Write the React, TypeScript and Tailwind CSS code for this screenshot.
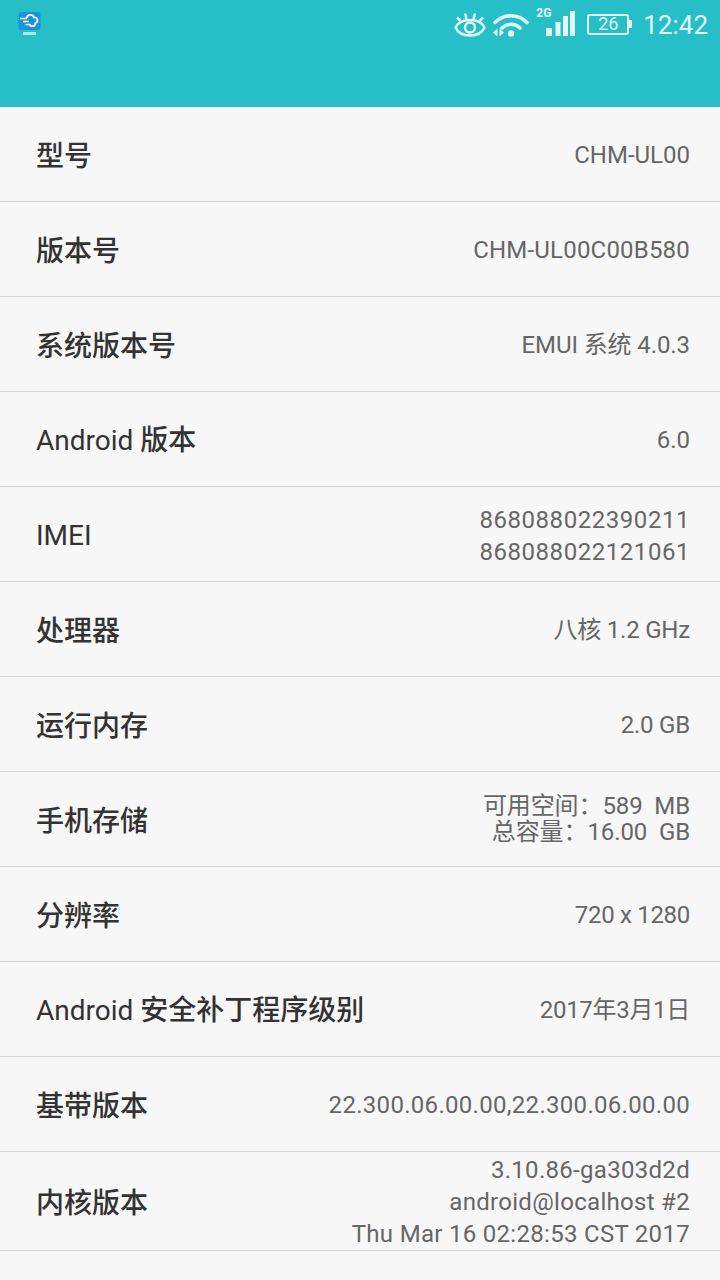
import type { ReactNode } from "react";

const rows: { label: ReactNode; value: ReactNode; labelClass?: string; valueClass?: string; rowClass?: string }[] = [
  { label: <span className="font-medium">型号</span>, value: "CHM-UL00" },
  { label: <span className="font-medium">版本号</span>, value: "CHM-UL00C00B580", valueClass: "leading-[32px] pt-[2px] tracking-[0.2px]" },
  { label: <span className="font-medium">系统版本号</span>, value: "EMUI 系统 4.0.3", valueClass: "leading-[32px] pt-[2px] tracking-[-0.1px]" },
  { label: <>Android <span className="font-medium">版本</span></>, labelClass: "pt-[4px]", value: "6.0" },
  {
    label: "IMEI",
    labelClass: "pt-[4px]",
    value: (
      <>
        <div>868088022390211</div>
        <div>868088022121061</div>
      </>
    ),
    valueClass: "leading-[32px] pt-[4px] tracking-[0.55px]",
  },
  { label: <span className="font-medium">处理器</span>, value: "八核 1.2 GHz", valueClass: "leading-[32px] pt-[2px] tracking-[-0.2px]" },
  { label: <span className="font-medium">运行内存</span>, value: "2.0 GB", valueClass: "leading-[32px] pt-[2px] tracking-[-0.2px]" },
  {
    label: <span className="font-medium">手机存储</span>,
    value: (
      <>
        <div className="whitespace-pre">可用空间：589  MB</div>
        <div className="whitespace-pre">总容量：16.00  GB</div>
      </>
    ),
    valueClass: "leading-[26px] tracking-[-0.1px]",
  },
  { label: <span className="font-medium">分辨率</span>, value: "720 x 1280", valueClass: "leading-[32px] pt-[2px] tracking-[-0.3px]" },
  {
    label: <>Android <span className="font-medium">安全补丁程序级别</span></>,
    labelClass: "pt-[4px]",
    value: "2017年3月1日",
    valueClass: "leading-[32px] pt-[2px] tracking-[-0.3px]",
  },
  {
    label: <span className="font-medium">基带版本</span>,
    value: "22.300.06.00.00,22.300.06.00.00",
    valueClass: "leading-[32px] pt-[2px] tracking-[0.3px]",
  },
  {
    label: <span className="font-medium">内核版本</span>,
    value: (
      <>
        <div>3.10.86-ga303d2d</div>
        <div>android@localhost #2</div>
        <div>Thu Mar 16 02:28:53 CST 2017</div>
      </>
    ),
    valueClass: "leading-[32px] pt-[2px] tracking-[0.3px]",
    rowClass: "h-[99px]",
  },
];

function StatusIcons() {
  return (
    <div className="flex h-[50px] items-center text-[#e2f8f8]">
      {/* eye */}
      <svg width="32" height="26" viewBox="0 0 32 26" fill="none" stroke="currentColor" strokeWidth="2.500">
        <path d="M1.500 15.500C4 10 9.500 8 16 8s12 2 14.500 7.500C28 21 22.500 23.500 16 23.500S4 21 1.500 15.500z" />
        <circle cx="16" cy="15.500" r="5" />
        <path d="M6.500 9L3 5.500M12.500 7L11 1.500M19.500 7L21 1.500M25.500 9L29 5.500" />
      </svg>
      {/* wifi */}
      <svg className="ml-[6px]" width="38" height="26" viewBox="0 0 38 26" fill="none" stroke="currentColor" strokeLinecap="round">
        <path d="M3 10.500C12 1.500 26 1.500 35 10.500" strokeWidth="3.600" />
        <path d="M10 16c5.500-5 12.500-5 18 0" strokeWidth="3.600" />
        <circle cx="19" cy="21.500" r="3.200" fill="currentColor" stroke="none" />
        <path d="M5.500 16.500l-4.500 4 4.500 4zM7.500 16.500l4.500 4-4.500 4z" fill="currentColor" stroke="none" />
      </svg>
      {/* signal */}
      <div className="relative ml-[6px] mb-[2px] h-[32px] w-[40px]">
        <span className="absolute left-0 top-[-1px] font-['Roboto',sans-serif] text-[12px] font-bold leading-[12px]">2G</span>
        <svg className="absolute left-0 top-0" width="40" height="32" viewBox="0 0 40 32" fill="currentColor">
          <rect x="10" y="20" width="6" height="8" />
          <rect x="19.500" y="14" width="5" height="14" />
          <rect x="27" y="8" width="5" height="20" />
          <rect x="34" y="3" width="5" height="25" />
        </svg>
      </div>
      {/* battery */}
      <div className="ml-[11px] mb-[2px] flex items-center">
        <div className="flex h-[21px] w-[42px] items-center justify-center rounded-[3px] border-2 border-current font-['Roboto',sans-serif] text-[18px] leading-none">
          26
        </div>
        <div className="h-[8px] w-[3px] bg-current" />
      </div>
      <span className="ml-[11px] font-['Roboto',sans-serif] text-[26px] leading-none">12:42</span>
    </div>
  );
}

function AppLogo() {
  return (
    <svg width="24" height="24" viewBox="0 0 24 24">
      <rect x="0.500" y="0" width="22" height="18" rx="3" fill="#1b93db" />
      <path d="M2 6.500h7M5 9.500h6M7.500 12.500h5" stroke="#fff" strokeWidth="1.300" />
      <path d="M8.500 6c1-4 6.500-4 7.500-.5 3.500-.5 5 4 1.500 5.500 0 3.500-4 4-6 2" fill="none" stroke="#fff" strokeWidth="1.800" />
      <rect x="5" y="20" width="13" height="3" fill="#b5e3ef" />
    </svg>
  );
}

export default function App() {
  return (
    <div className="flex h-[1280px] w-[720px] flex-col overflow-hidden bg-[#f7f7f7] font-['Roboto','Noto_Sans_CJK_SC',sans-serif]">
      <div className="flex h-[107px] shrink-0 items-start justify-between bg-[#27bfc7] pl-[18px] pr-[12px]">
        <div className="pt-[12px]">
          <AppLogo />
        </div>
        <StatusIcons />
      </div>
      {rows.map((row, i) => (
        <div
          key={i}
          className={`flex shrink-0 items-center justify-between border-b border-[#d6d6d6] pl-[36px] pr-[30px] ${row.rowClass ?? "h-[95px]"}`}
        >
          <div className={`whitespace-nowrap text-[28px] leading-[36px] text-[#333333] ${row.labelClass ?? "pt-[6px]"}`}>{row.label}</div>
          <div className={`whitespace-nowrap text-right text-[24px] text-[#666666] ${row.valueClass ?? "leading-[32px] pt-[2px]"}`}>
            {row.value}
          </div>
        </div>
      ))}
    </div>
  );
}
